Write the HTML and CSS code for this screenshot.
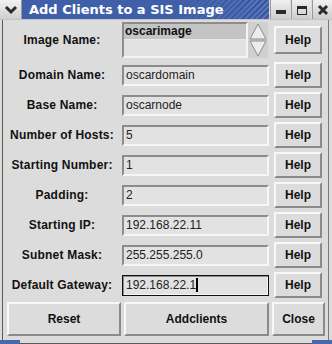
FILE: index.html
```html
<!DOCTYPE html>
<html>
  <head>
    <title>Add Clients to a SIS Image</title>
    <link rel="stylesheet" href="styles.css">
  </head>
  <body>
    <div class="window">
      <div class="titlebar">
        <div class="menu-btn">
          <svg width="14" height="10" viewBox="0 0 14 10"><path d="M2 2 L7 7 L12 2" fill="none" stroke="#2a2a2a" stroke-width="3"/></svg>
        </div>
        <div class="title">Add Clients to a SIS Image</div>
        <div class="wbtn">
          <svg width="12" height="12" viewBox="0 0 12 12"><rect x="1" y="6" width="10" height="4" fill="#2a2a2a"/></svg>
        </div>
        <div class="wbtn">
          <svg width="12" height="12" viewBox="0 0 12 12"><rect x="1.5" y="2.5" width="9" height="8" fill="none" stroke="#2a2a2a"/><rect x="1" y="2" width="10" height="3" fill="#2a2a2a"/></svg>
        </div>
        <div class="wbtn">
          <svg width="12" height="12" viewBox="0 0 12 12"><path d="M2 2 L10 10 M10 2 L2 10" stroke="#2a2a2a" stroke-width="3"/></svg>
        </div>
      </div>
      <div class="frame">
        <div class="form">
          <div class="label">Image Name:</div>
          <div class="listwrap">
            <div class="listbox"><div class="item">oscarimage</div></div>
            <div class="scroll">
              <svg width="20" height="36" viewBox="0 0 20 36">
                <path d="M10 2 L18 17 L2 17 Z" fill="#ececec" stroke="#8c8c8c"/>
                <path d="M10 34 L18 19 L2 19 Z" fill="#ececec" stroke="#8c8c8c"/>
              </svg>
            </div>
          </div>
          <div class="btn help first">Help</div>

          <div class="label">Domain Name:</div>
          <div class="entry">oscardomain</div>
          <div class="btn help">Help</div>

          <div class="label">Base Name:</div>
          <div class="entry">oscarnode</div>
          <div class="btn help">Help</div>

          <div class="label">Number of Hosts:</div>
          <div class="entry">5</div>
          <div class="btn help">Help</div>

          <div class="label">Starting Number:</div>
          <div class="entry">1</div>
          <div class="btn help">Help</div>

          <div class="label">Padding:</div>
          <div class="entry">2</div>
          <div class="btn help">Help</div>

          <div class="label">Starting IP:</div>
          <div class="entry">192.168.22.11</div>
          <div class="btn help">Help</div>

          <div class="label">Subnet Mask:</div>
          <div class="entry">255.255.255.0</div>
          <div class="btn help">Help</div>

          <div class="label">Default Gateway:</div>
          <div class="entry focus">192.168.22.1<span class="caret"></span></div>
          <div class="btn help">Help</div>
        </div>
        <div class="actions">
          <div class="btn reset">Reset</div>
          <div class="btn add">Addclients</div>
          <div class="btn close">Close</div>
        </div>
      </div>
      <div class="bottom">
        <div class="corner"></div>
        <div class="corner"></div>
      </div>
    </div>
  </body>
</html>
```

FILE: styles.css
```css
html,
body {
  margin: 0;
  background: #dcdcdc;
}
.window {
  width: 332px;
  height: 344px;
  display: flex;
  flex-direction: column;
  background: #dcdcdc;
  font-family: "Liberation Sans", Arial, sans-serif;
  font-size: 12px;
  color: #111;
}
.titlebar {
  height: 19px;
  display: flex;
  border-bottom: 1px solid #c4c4c4;
}
.menu-btn {
  width: 21px;
  display: flex;
  align-items: center;
  justify-content: center;
  background: linear-gradient(#f2f2f2, #cfcfcf);
  border-right: 1px solid #9a9a9a;
}
.title {
  flex: 1;
  padding-left: 7px;
  line-height: 19px;
  color: #fff;
  font-family: "DejaVu Sans", sans-serif;
  font-weight: bold;
  font-size: 13px;
  background-color: #3f5fa8;
  background-image: linear-gradient(90deg, #3f5fa8 0, #3f5fa8 62%, rgba(63,95,168,0) 100%),
    repeating-linear-gradient(-45deg, #5676bd 0 2px, #3a5699 2px 4px);
}
.wbtn {
  width: 19px;
  margin-left: 1px;
  display: flex;
  align-items: center;
  justify-content: center;
  background: linear-gradient(#f0f0f0, #cdcdcd);
  border-left: 1px solid #9a9a9a;
}
.frame {
  flex: 1;
  padding: 2px 7px 0 7px;
  box-shadow: inset 2px 0 0 #dcdcdc, inset 3px 0 0 #5a5a5a, inset -3px 0 0 #dcdcdc, inset -4px 0 0 #7a7a7a;
}
.form {
  display: grid;
  grid-template-columns: 110px 147px 48px;
  grid-template-rows: 36px repeat(8, 26px);
  column-gap: 5px;
  row-gap: 4px;
  align-items: center;
}
.label {
  text-align: center;
  font-weight: bold;
  letter-spacing: 0.2px;
}
.listwrap {
  display: flex;
  height: 36px;
}
.listbox {
  width: 122px;
  border: 2px solid;
  border-color: #8c8c8c #f4f4f4 #f4f4f4 #8c8c8c;
  background: #e2e2e2;
}
.item {
  height: 15px;
  line-height: 15px;
  padding-left: 1px;
  font-weight: bold;
  background: #c4c4c4;
  border-bottom: 1px solid #e8e8e8;
}
.scroll {
  width: 20px;
  background: #d0d0d0;
}
.scroll svg {
  display: block;
}
.entry {
  height: 17px;
  line-height: 17px;
  padding-left: 2px;
  border: 2px solid;
  border-color: #8c8c8c #f6f6f6 #f6f6f6 #8c8c8c;
  background: #e2e2e2;
  color: #222;
}
.entry.focus {
  border: 1px solid #111;
  box-shadow: inset 1px 1px 0 #8c8c8c, inset -1px -1px 0 #f6f6f6;
  height: 19px;
  line-height: 19px;
  padding-left: 3px;
}
.caret {
  display: inline-block;
  width: 2px;
  height: 14px;
  background: #000;
  vertical-align: -3px;
}
.btn {
  display: flex;
  align-items: center;
  justify-content: center;
  font-weight: bold;
  background: #dcdcdc;
  border: 2px solid;
  border-color: #f8f8f8 #8a8a8a #8a8a8a #f8f8f8;
  box-sizing: border-box;
}
.help {
  height: 26px;
}
.help.first {
  height: 28px;
}
.actions {
  display: flex;
  gap: 3px;
  margin-top: 4px;
  height: 34px;
}
.reset {
  width: 114px;
}
.add {
  width: 145px;
}
.close {
  width: 53px;
}
.bottom {
  height: 4px;
  display: flex;
  justify-content: space-between;
  box-shadow: inset 0 -1px 0 #5a5a5a;
}
.corner {
  width: 20px;
  background: #4a68b0;
}
```
